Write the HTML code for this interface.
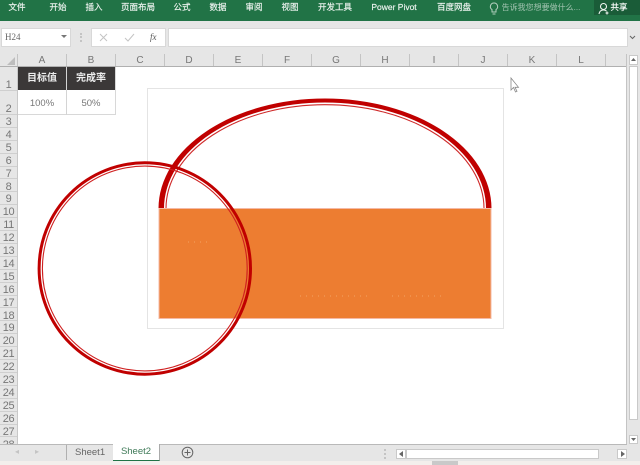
<!DOCTYPE html>
<html lang="zh">
<head>
<meta charset="utf-8">
<style>
html,body{margin:0;padding:0;background:#fff}
#p{position:relative;width:640px;height:465px;overflow:hidden;background:#e6e6e6;font-family:"Liberation Sans","Noto Sans CJK SC",sans-serif;color:#555}
#p div,#p span{position:absolute;white-space:nowrap}
.rb{top:1px;height:12px;line-height:12px;font-size:8.5px;color:#eef4f0;transform:translateX(-50%);-webkit-text-stroke:.15px #eef4f0}
.col{top:54px;height:13px;line-height:14px;font-size:10px;color:#777;text-align:center;width:48px}
.sep{top:54px;width:1px;height:12px;background:#c4c4c4}
.row{left:0;width:17px;text-align:center;font-size:11px;letter-spacing:-.4px;color:#777;height:12.9px;line-height:14px;border-bottom:1px solid #cfcfcf;box-sizing:border-box}
.box{background:#fff;border:1px solid #d8d8d8;box-sizing:border-box}
</style>
</head>
<body>
<div id="p">
<div style="left:0;top:0;width:640px;height:21px;background:#217346"></div>
<div style="left:594px;top:0;width:46px;height:15px;background:#1a5c38"></div>
<span class="rb" style="left:17px">文件</span>
<span class="rb" style="left:58px">开始</span>
<span class="rb" style="left:94px">插入</span>
<span class="rb" style="left:138px">页面布局</span>
<span class="rb" style="left:182px">公式</span>
<span class="rb" style="left:218px">数据</span>
<span class="rb" style="left:254px">审阅</span>
<span class="rb" style="left:290px">视图</span>
<span class="rb" style="left:335px">开发工具</span>
<span class="rb" style="left:394px">Power Pivot</span>
<span class="rb" style="left:454px">百度网盘</span>
<span class="rb" style="left:541px;color:#a3c4b1;-webkit-text-stroke:0;font-size:8px;top:2px">告诉我您想要做什么...</span>
<svg style="position:absolute;left:488px;top:2px" width="12" height="14" viewBox="0 0 12 14" fill="none" stroke="#b5d0c0"><path d="M6 1a3.6 3.6 0 0 0-2 6.600V10h4V7.600A3.600 3.600 0 0 0 6 1zM4.500 12h3"/></svg>
<svg style="position:absolute;left:598px;top:2px" width="12" height="13" viewBox="0 0 12 13" fill="none" stroke="#eef5f0" stroke-width="1.100"><circle cx="5.500" cy="4.500" r="3"/><path d="M1 12c.5-3 2-4 4.500-4 1 0 2 .3 3 1M9 9.500v3M7.500 11h3"/></svg>
<span class="rb" style="left:619px;color:#fff;font-size:8.500px">共享</span>

<div class="box" style="left:1px;top:28px;width:70px;height:19px"></div>
<span style="left:5px;top:32px;font:9px/11px 'Liberation Serif',serif;color:#666">H24</span>
<svg style="position:absolute;left:61px;top:35px" width="7" height="4"><path d="M0 0h6L3 3z" fill="#777"/></svg>
<div style="left:80px;top:33px;width:2px;height:9px;border-left:2px dotted #c4c4c4"></div>
<div class="box" style="left:91px;top:28px;width:75px;height:19px"></div>
<svg style="position:absolute;left:99px;top:33px" width="50" height="10" fill="none" stroke="#c4c4c4"><path d="M1 1l7 7M8 1L1 8M26 5l3 3 6-7"/></svg>
<span style="left:150px;top:31px;font:italic 9px/12px 'Liberation Serif',serif;color:#555">fx</span>
<div class="box" style="left:168px;top:28px;width:460px;height:19px"></div>
<svg style="position:absolute;left:629px;top:35px" width="7" height="5" fill="none" stroke="#666"><path d="M1 1l2.500 2.500L6 1"/></svg>

<div style="left:0;top:54px;width:626px;height:12px;background:#e6e6e6;border-bottom:1px solid #b0b0b0;box-sizing:content-box"></div>
<svg style="position:absolute;left:7px;top:57px" width="9" height="8"><path d="M8 0v8H0z" fill="#bdbdbd"/></svg>
<div class="sep" style="left:17px"></div><div class="sep" style="left:66px"></div><div class="sep" style="left:115px"></div><div class="sep" style="left:164px"></div><div class="sep" style="left:213px"></div><div class="sep" style="left:262px"></div><div class="sep" style="left:311px"></div><div class="sep" style="left:360px"></div><div class="sep" style="left:409px"></div><div class="sep" style="left:458px"></div><div class="sep" style="left:507px"></div><div class="sep" style="left:556px"></div><div class="sep" style="left:605px"></div>
<span class="col" style="left:18px">A</span><span class="col" style="left:67px">B</span><span class="col" style="left:116px">C</span><span class="col" style="left:165px">D</span><span class="col" style="left:214px">E</span><span class="col" style="left:263px">F</span><span class="col" style="left:312px">G</span><span class="col" style="left:361px">H</span><span class="col" style="left:410px">I</span><span class="col" style="left:459px">J</span><span class="col" style="left:508px">K</span><span class="col" style="left:557px">L</span>

<div style="left:18px;top:67px;width:608px;height:377px;background:#fff"></div>
<div style="left:17px;top:67px;width:1px;height:377px;background:#c8c8c8"></div>
<div style="left:626px;top:54px;width:1px;height:390px;background:#c4c4c4"></div>

<div class="row" style="top:67px;height:24px;line-height:36px">1</div>
<div class="row" style="top:91px;height:24px;line-height:36px">2</div>
<div class="row" style="top:115px">3</div><div class="row" style="top:127.9px">4</div><div class="row" style="top:140.8px">5</div><div class="row" style="top:153.7px">6</div><div class="row" style="top:166.6px">7</div><div class="row" style="top:179.5px">8</div><div class="row" style="top:192.4px">9</div><div class="row" style="top:205.3px">10</div><div class="row" style="top:218.2px">11</div><div class="row" style="top:231.1px">12</div><div class="row" style="top:244px">13</div><div class="row" style="top:256.9px">14</div><div class="row" style="top:269.8px">15</div><div class="row" style="top:282.7px">16</div><div class="row" style="top:295.6px">17</div><div class="row" style="top:308.5px">18</div><div class="row" style="top:321.4px">19</div><div class="row" style="top:334.3px">20</div><div class="row" style="top:347.2px">21</div><div class="row" style="top:360.1px">22</div><div class="row" style="top:373px">23</div><div class="row" style="top:385.9px">24</div><div class="row" style="top:398.8px">25</div><div class="row" style="top:411.7px">26</div><div class="row" style="top:424.6px">27</div>
<div class="row" style="top:437.5px;height:6.500px;overflow:hidden;border:0">28</div>

<div style="left:18px;top:67px;width:48px;height:23px;background:#3b3838;color:#eee;font-size:10px;font-weight:bold;line-height:23px;text-align:center">目标值</div>
<div style="left:67px;top:67px;width:48px;height:23px;background:#3b3838;color:#eee;font-size:10px;font-weight:bold;line-height:23px;text-align:center">完成率</div>
<div style="left:18px;top:91px;width:48px;height:23px;border-bottom:1px solid #d8d8d8;color:#777;font-size:9.500px;line-height:25px;text-align:center">100%</div>
<div style="left:67px;top:91px;width:48px;height:23px;border-bottom:1px solid #d8d8d8;color:#777;font-size:9.500px;line-height:25px;text-align:center">50%</div>
<div style="left:66px;top:67px;width:1px;height:48px;background:#d4d4d4"></div>
<div style="left:115px;top:67px;width:1px;height:48px;background:#d8d8d8"></div>

<div style="left:147px;top:88px;width:357px;height:241px;border:1px solid #e4e4e4;box-sizing:border-box"></div>

<svg style="position:absolute;left:0;top:0" width="640" height="465" fill="none">
<path fill-rule="evenodd" fill="#c00000" d="M158.500 208.500A166.500 110 0 0 1 491.500 208.500H486A161 106 0 0 0 164 208.500Z"/>
<path d="M166 208.500A159 103.800 0 0 1 484 208.500" stroke="#cf2a2a" stroke-width="1.100"/>
<rect x="159" y="208.500" width="332" height="110" fill="#ed7d31" stroke="#f4b9a5" stroke-width="1"/>
<circle cx="144.800" cy="268.500" r="105.700" stroke="#c00000" stroke-width="3"/>
<circle cx="144.800" cy="268.500" r="102.400" stroke="#cf2020" stroke-width="1.100"/>
<path d="M188 242h24M300 296h70M392 296h50" stroke="#f3a264" stroke-width="1" stroke-dasharray="1 5"/>
<path d="M511 78v12l2.500-2.500 2 4.500 1.500-.7-2-4h3.500z" fill="#fff" stroke="#888" stroke-width=".8"/>
</svg>

<div style="left:0;top:444px;width:627px;height:1px;background:#b9b9b9"></div>
<div style="left:66px;top:445px;width:1px;height:15px;background:#b0b0b0"></div>
<span style="left:15px;top:447px;font-size:8px;color:#c4c4c4;line-height:10px">◂</span>
<span style="left:35px;top:447px;font-size:8px;color:#c4c4c4;line-height:10px">▸</span>
<span style="left:75px;top:447px;font-size:9.500px;line-height:12px;color:#666">Sheet1</span>
<div style="left:113px;top:444px;width:47px;height:17px;background:#fff;border-right:1px solid #aaa;border-bottom:1px solid #217346;box-sizing:border-box;color:#3f7a58;font-size:9.500px;line-height:16px;text-align:center">Sheet2</div>
<svg style="position:absolute;left:181px;top:446px" width="13" height="13" fill="none" stroke="#666"><circle cx="6.500" cy="6.500" r="5.300"/><path d="M6.500 3.500v6M3.500 6.500h6"/></svg>
<div style="left:384px;top:449px;width:3px;height:10px;border-left:2px dotted #c4c4c4"></div>
<div class="box" style="left:396px;top:449px;width:10px;height:10px;border-color:#c9c9c9"></div>
<svg style="position:absolute;left:399px;top:451px" width="5" height="6"><path d="M4 0v6L0 3z" fill="#666"/></svg>
<div style="left:406px;top:449px;width:193px;height:10px;background:#fff;border:1px solid #c9c9c9;box-sizing:border-box"></div>
<div class="box" style="left:617px;top:449px;width:10px;height:10px;border-color:#c9c9c9"></div>
<svg style="position:absolute;left:621px;top:451px" width="5" height="6"><path d="M0 0v6l4-3z" fill="#666"/></svg>

<div style="left:629px;top:55px;width:9px;height:10px;background:#fff;border:1px solid #c9c9c9;box-sizing:border-box"></div>
<svg style="position:absolute;left:631px;top:58px" width="6" height="4"><path d="M0 3h5L2.500 0z" fill="#666"/></svg>
<div style="left:629px;top:66px;width:9px;height:354px;background:#fff;border:1px solid #c9c9c9;box-sizing:border-box"></div>
<div style="left:629px;top:435px;width:9px;height:9px;background:#fff;border:1px solid #c9c9c9;box-sizing:border-box"></div>
<svg style="position:absolute;left:631px;top:438px" width="6" height="4"><path d="M0 0h5L2.500 3z" fill="#666"/></svg>

<div style="left:0;top:461px;width:640px;height:4px;background:#f3efec"></div>
<div style="left:432px;top:461px;width:26px;height:4px;background:#c9c9c9"></div>
</div>
</body>
</html>
